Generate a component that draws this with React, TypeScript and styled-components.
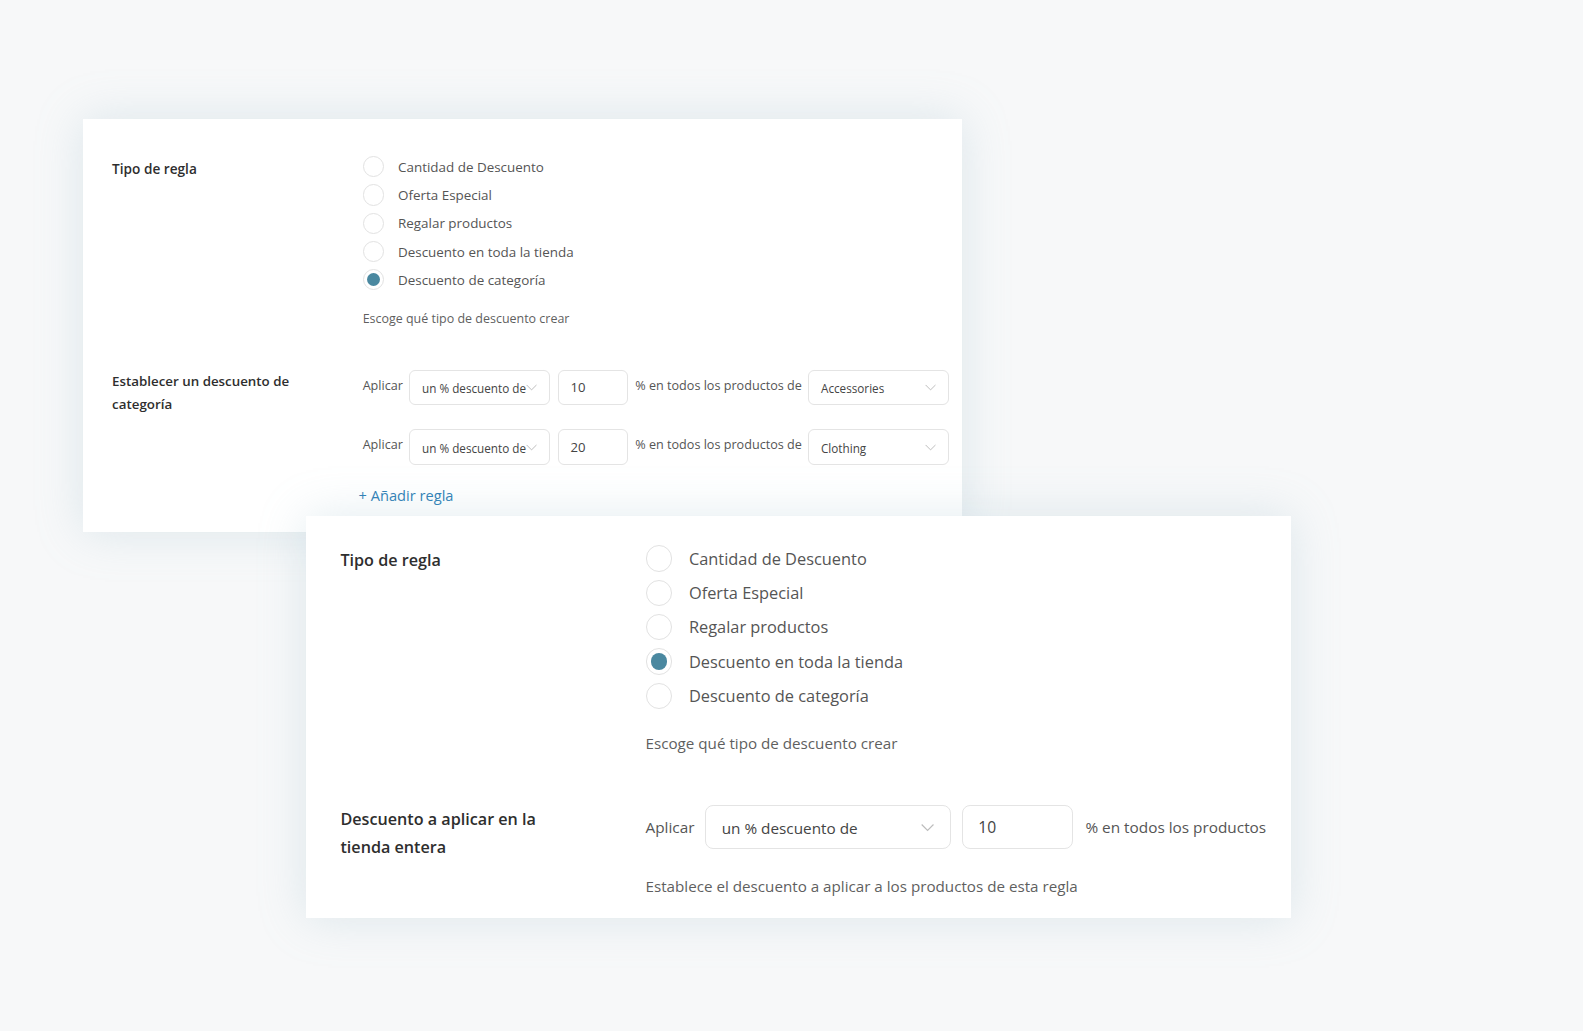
import React from "react";
import styled, { createGlobalStyle, ThemeProvider } from "styled-components";

type T = {
  width: number;
  padTop: number;
  padX: number;
  padBottom: number;
  labelCol: number;
  labelMax: number;
  labelFs: number;
  sectionLabelFs: number;
  labelLh: number;
  labelWeight: number;
  labelPt: number;
  optFs: number;
  rowH: number;
  radio: number;
  dot: number;
  radioGap: number;
  helperFs: number;
  helperLh: number;
  helperMt: number;
  sectionGap: number;
  ctrlH: number;
  ctrlFs: number;
  inputFs: number;
  ruleFs: number;
  ctrlPadX: number;
  radius: number;
  rowGap: number;
  chevron: number;
  addFs: number;
  addMt: number;
  noteMt: number;
};

/* All measurements were taken on the reference at a 0.99 view scale; K restores real pixels. */
const K = 1583 / 1567;

const scaleTheme = (t: T): T => {
  const out = { ...t } as Record<string, number>;
  Object.keys(out).forEach((key) => {
    if (key !== "labelWeight") out[key] = out[key] * K;
  });
  return out as unknown as T;
};

const small: T = scaleTheme({
  width: 870,
  padTop: 33,
  padX: 29,
  padBottom: 26,
  labelCol: 248,
  labelMax: 200,
  labelFs: 13.5,
  sectionLabelFs: 13.2,
  labelLh: 23,
  labelWeight: 600,
  labelPt: 4,
  optFs: 13.3,
  rowH: 28,
  radio: 21,
  dot: 13,
  radioGap: 14,
  helperFs: 12.36,
  helperLh: 20,
  helperMt: 15,
  sectionGap: 40,
  ctrlH: 35,
  ctrlFs: 11.6,
  inputFs: 13,
  ruleFs: 12.5,
  ctrlPadX: 12,
  radius: 6,
  rowGap: 24,
  chevron: 11,
  addFs: 14.5,
  addMt: 19,
  noteMt: 15,
});

const large: T = scaleTheme({
  width: 975,
  padTop: 25,
  padX: 34,
  padBottom: 20,
  labelCol: 302,
  labelMax: 230,
  labelFs: 16,
  sectionLabelFs: 16,
  labelLh: 28,
  labelWeight: 600,
  labelPt: 5,
  optFs: 16.2,
  rowH: 34,
  radio: 26,
  dot: 16,
  radioGap: 17,
  helperFs: 15.05,
  helperLh: 24,
  helperMt: 18,
  sectionGap: 49,
  ctrlH: 44,
  ctrlFs: 15.15,
  inputFs: 15.5,
  ruleFs: 15.2,
  ctrlPadX: 16,
  radius: 8,
  rowGap: 24,
  chevron: 13,
  addFs: 17,
  addMt: 19,
  noteMt: 24,
});

const Global = createGlobalStyle`
  html, body { margin: 0; padding: 0; }
  body {
    background: #f7f8f9;
    font-family: "Open Sans", "Noto Sans", sans-serif;
    color: #333;
    -webkit-font-smoothing: antialiased;
  }
`;

const Stage = styled.div`
  width: 1583px;
  height: 1031px;
  padding: ${118 * K}px 0 0 ${82 * K}px;
  box-sizing: border-box;
  overflow: hidden;
`;

const Card = styled.div<{ $offsetX?: number; $overlap?: number }>`
  position: relative;
  z-index: ${(p) => (p.$overlap ? 2 : 1)};
  width: ${(p) => p.theme.width}px;
  margin-left: ${(p) => (p.$offsetX ?? 0) * K}px;
  margin-top: ${(p) => -(p.$overlap ?? 0) * K}px;
  box-sizing: border-box;
  background: #fff;
  padding: ${(p) => p.theme.padTop}px ${(p) => p.theme.padX}px
    ${(p) => p.theme.padBottom}px;
  box-shadow: 0 0 44px rgba(150, 185, 200, 0.28);
`;

const Section = styled.div<{ $first?: boolean }>`
  display: grid;
  grid-template-columns: ${(p) => p.theme.labelCol}px 1fr;
  margin-top: ${(p) => (p.$first ? 0 : p.theme.sectionGap)}px;
`;

const Label = styled.div`
  max-width: ${(p) => p.theme.labelMax}px;
  padding-top: ${(p) => p.theme.labelPt}px;
  font-size: ${(p) => p.theme.labelFs}px;
  line-height: ${(p) => p.theme.labelLh}px;
  font-weight: ${(p) => p.theme.labelWeight};
  color: #2e2e2e;
`;

const SectionLabel = styled(Label)`
  padding-top: 0;
  font-size: ${(p) => p.theme.sectionLabelFs}px;
`;

const Field = styled.div`
  display: flex;
  flex-direction: column;
`;

const RadioRow = styled.label`
  display: flex;
  align-items: center;
  gap: ${(p) => p.theme.radioGap}px;
  height: ${(p) => p.theme.rowH}px;
  font-size: ${(p) => p.theme.optFs}px;
  color: #555;
  cursor: pointer;
`;

const RadioCircle = styled.span<{ $checked?: boolean }>`
  width: ${(p) => p.theme.radio}px;
  height: ${(p) => p.theme.radio}px;
  box-sizing: border-box;
  border-radius: 50%;
  border: 1px solid #e2e2e2;
  background: #fff;
  display: flex;
  align-items: center;
  justify-content: center;
  flex: none;
  &::after {
    content: "";
    display: ${(p) => (p.$checked ? "block" : "none")};
    width: ${(p) => p.theme.dot}px;
    height: ${(p) => p.theme.dot}px;
    border-radius: 50%;
    background: #4a88a0;
  }
`;

const Helper = styled.div<{ $note?: boolean }>`
  margin-top: ${(p) => (p.$note ? p.theme.noteMt : p.theme.helperMt)}px;
  font-size: ${(p) => p.theme.helperFs}px;
  line-height: ${(p) => p.theme.helperLh}px;
  color: #5f5f5f;
`;

const Rules = styled.div`
  display: flex;
  flex-direction: column;
  gap: ${(p) => p.theme.rowGap}px;
`;

const RuleRow = styled.div`
  display: flex;
  align-items: center;
  height: ${(p) => p.theme.ctrlH}px;
`;

const Text = styled.span<{ $gap: number; $dy?: number }>`
  font-size: ${(p) => p.theme.ruleFs}px;
  color: #555;
  margin-right: ${(p) => p.$gap * K}px;
  white-space: nowrap;
  position: relative;
  top: ${(p) => (p.$dy ?? 0) * K}px;
`;

const SelectBox = styled.div<{ $w: number; $gap: number }>`
  position: relative;
  width: ${(p) => p.$w * K}px;
  height: ${(p) => p.theme.ctrlH}px;
  margin-right: ${(p) => p.$gap * K}px;
  box-sizing: border-box;
  border: 1px solid #e4e4e4;
  border-radius: ${(p) => p.theme.radius}px;
  background: #fff;
  display: flex;
  align-items: center;
  padding: 2px ${(p) => p.theme.ctrlPadX}px 0;
  font-size: ${(p) => p.theme.ctrlFs}px;
  color: #444;
  white-space: nowrap;
  flex: none;
`;

const Chevron = styled.svg<{ $right: number }>`
  position: absolute;
  right: ${(p) => p.$right * K}px;
  top: 50%;
  transform: translateY(-40%);
  width: ${(p) => p.theme.chevron}px;
  height: ${(p) => p.theme.chevron * 0.6}px;
`;

const InputBox = styled.div<{ $w: number; $gap: number }>`
  width: ${(p) => p.$w * K}px;
  height: ${(p) => p.theme.ctrlH}px;
  margin-right: ${(p) => p.$gap * K}px;
  box-sizing: border-box;
  border: 1px solid #e4e4e4;
  border-radius: ${(p) => p.theme.radius}px;
  background: #fff;
  display: flex;
  align-items: center;
  padding: 0 ${(p) => p.theme.ctrlPadX - 1}px;
  font-size: ${(p) => p.theme.inputFs}px;
  color: #444;
  flex: none;
`;

const AddRule = styled.a`
  margin-top: ${(p) => p.theme.addMt}px;
  margin-left: ${-4 * K}px;
  font-size: ${(p) => p.theme.addFs}px;
  line-height: ${22 * K}px;
  color: #2f7fb6;
  text-decoration: none;
  cursor: pointer;
  align-self: flex-start;
`;

const Select: React.FC<{ w: number; gap: number; value: string; chevronRight: number }> = ({
  w,
  gap,
  value,
  chevronRight,
}) => (
  <SelectBox $w={w} $gap={gap}>
    {value}
    <Chevron $right={chevronRight} viewBox="0 0 10 6" fill="none">
      <polyline points="0.5,0.5 5,5 9.5,0.5" stroke="#bdbdbd" strokeWidth="0.9" />
    </Chevron>
  </SelectBox>
);

const RadioGroup: React.FC<{ options: string[]; checked: number }> = ({ options, checked }) => (
  <>
    {options.map((o, i) => (
      <RadioRow key={o}>
        <RadioCircle $checked={i === checked} />
        {o}
      </RadioRow>
    ))}
  </>
);

const options = [
  "Cantidad de Descuento",
  "Oferta Especial",
  "Regalar productos",
  "Descuento en toda la tienda",
  "Descuento de categoría",
];

const categoryRules = [
  { v: "10", c: "Accessories" },
  { v: "20", c: "Clothing" },
];

export default function App() {
  return (
    <>
      <Global />
      <Stage>
        <ThemeProvider theme={small}>
          <Card>
            <Section $first>
              <Label>Tipo de regla</Label>
              <Field>
                <RadioGroup options={options} checked={4} />
                <Helper>Escoge qué tipo de descuento crear</Helper>
              </Field>
            </Section>
            <Section>
              <SectionLabel>Establecer un descuento de categoría</SectionLabel>
              <Field>
                <Rules>
                  {categoryRules.map((r) => (
                    <RuleRow key={r.v}>
                      <Text $gap={6} $dy={-2}>Aplicar</Text>
                      <Select w={140} gap={8} value="un % descuento de" chevronRight={12} />
                      <InputBox $w={69} $gap={7}>{r.v}</InputBox>
                      <Text $gap={6} $dy={-2}>% en todos los productos de</Text>
                      <Select w={140} gap={0} value={r.c} chevronRight={12} />
                    </RuleRow>
                  ))}
                </Rules>
                <AddRule>+ Añadir regla</AddRule>
              </Field>
            </Section>
          </Card>
        </ThemeProvider>
        <ThemeProvider theme={large}>
          <Card $offsetX={221} $overlap={16}>
            <Section $first>
              <Label>Tipo de regla</Label>
              <Field>
                <RadioGroup options={options} checked={3} />
                <Helper>Escoge qué tipo de descuento crear</Helper>
              </Field>
            </Section>
            <Section>
              <SectionLabel>Descuento a aplicar en la tienda entera</SectionLabel>
              <Field>
                <RuleRow>
                  <Text $gap={10}>Aplicar</Text>
                  <Select w={244} gap={11} value="un % descuento de" chevronRight={16} />
                  <InputBox $w={110} $gap={12}>10</InputBox>
                  <Text $gap={0}>% en todos los productos</Text>
                </RuleRow>
                <Helper $note>Establece el descuento a aplicar a los productos de esta regla</Helper>
              </Field>
            </Section>
          </Card>
        </ThemeProvider>
      </Stage>
    </>
  );
}
